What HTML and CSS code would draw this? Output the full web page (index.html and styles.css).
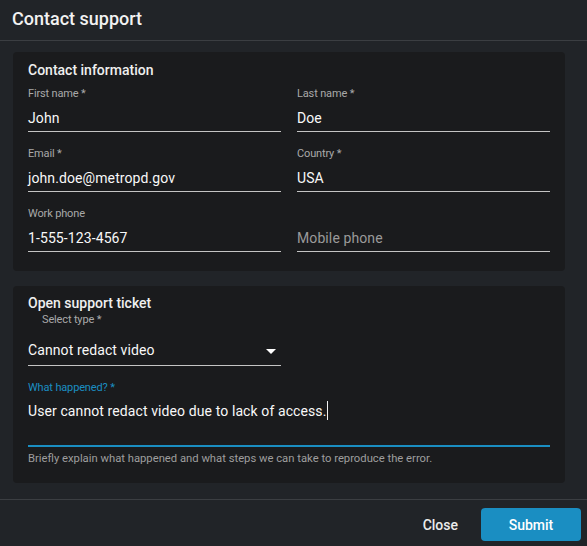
FILE: index.html
```html
<!DOCTYPE html>
<html>
<head>
<meta charset="utf-8">
<link rel="stylesheet" href="styles.css">
</head>
<body>
<div class="dialog">
  <header class="head">Contact support</header>
  <main class="body">
    <section class="card card-contact">
      <h2 class="card-title">Contact information</h2>
      <div class="grid">
        <div class="field">
          <div class="label">First name *</div>
          <div class="input">John</div>
        </div>
        <div class="field">
          <div class="label">Last name *</div>
          <div class="input">Doe</div>
        </div>
        <div class="field">
          <div class="label">Email *</div>
          <div class="input">john.doe@metropd.gov</div>
        </div>
        <div class="field">
          <div class="label">Country *</div>
          <div class="input">USA</div>
        </div>
        <div class="field">
          <div class="label">Work phone</div>
          <div class="input">1-555-123-4567</div>
        </div>
        <div class="field">
          <div class="label">&nbsp;</div>
          <div class="input placeholder">Mobile phone</div>
        </div>
      </div>
    </section>
    <section class="card card-ticket">
      <h2 class="card-title">Open support ticket</h2>
      <div class="label label-select">Select type *</div>
      <div class="select">
        <span>Cannot redact video</span>
        <svg class="arrow" width="10" height="5" viewBox="0 0 10 5"><path d="M0 0 L10 0 L5 5 Z" fill="#ffffff"/></svg>
      </div>
      <div class="label label-focus">What happened? *</div>
      <div class="textarea">User cannot redact video due to lack of access.<span class="caret"></span></div>
      <div class="helper">Briefly explain what happened and what steps we can take to reproduce the error.</div>
    </section>
  </main>
  <footer class="foot">
    <button class="btn btn-text">Close</button>
    <button class="btn btn-primary">Submit</button>
  </footer>
</div>
</body>
</html>
```
FILE: styles.css
```css
* { box-sizing: border-box; }
html, body {
  margin: 0;
  padding: 0;
  background: #212428;
}
body {
  font-family: Roboto, "Liberation Sans", sans-serif;
  color: #ececec;
}
.dialog {
  width: 587px;
  height: 546px;
  display: flex;
  flex-direction: column;
  background: #212428;
}
.head {
  height: 41px;
  padding: 8px 12px 0;
  font-size: 18px;
  font-weight: 500;
  line-height: 22px;
  border-bottom: 1px solid #3b3e42;
  color: #f2f2f2;
}
.body {
  padding: 11px 22px 0 13px;
  display: flex;
  flex-direction: column;
  gap: 15px;
  flex: 1;
}
.card {
  background: #1a1b1d;
  border-radius: 4px;
  padding: 9px 15px 15px;
}
.card-contact { height: 219px; }
.card-ticket { height: 197px; padding-top: 8px; }
.card-title {
  margin: 0;
  font-size: 14px;
  font-weight: 500;
  line-height: 18px;
  color: #efefef;
}
.grid {
  margin-top: 9px;
  display: grid;
  grid-template-columns: 253px 253px;
  column-gap: 16px;
  row-gap: 16px;
}
.label {
  font-size: 11px;
  line-height: 12px;
  color: #a9a9a9;
  letter-spacing: -0.15px;
}
.input {
  padding: 8px 0 3px;
  font-size: 14px;
  font-weight: 400;
  letter-spacing: 0.1px;
  line-height: 20px;
  border-bottom: 1px solid #c4c4c4;
  color: #f8f8f8;
}
.placeholder {
  color: #9a9a9a;
}
.label-select {
  margin-top: 2px;
  padding-left: 14px;
}
.select {
  width: 253px;
  height: 40px;
  padding-top: 14px;
  display: flex;
  justify-content: space-between;
  align-items: flex-start;
  border-bottom: 1px solid #c4c4c4;
  font-size: 14px;
  font-weight: 400;
  letter-spacing: 0.1px;
  line-height: 20px;
  color: #f8f8f8;
}
.arrow {
  margin: 9px 5px 0 0;
}
.label-focus {
  margin-top: 16px;
  color: #1a8ec2;
}
.textarea {
  width: 522px;
  height: 53px;
  padding-top: 7px;
  font-size: 14px;
  font-weight: 400;
  letter-spacing: 0.1px;
  line-height: 20px;
  border-bottom: 2px solid #1a8ec2;
  color: #f8f8f8;
}
.caret {
  display: inline-block;
  width: 1px;
  height: 19px;
  margin-left: 1px;
  vertical-align: -4px;
  background: #f2f2f2;
}
.helper {
  margin-top: 6px;
  font-size: 11.25px;
  line-height: 12px;
  color: #9e9e9e;
}
.foot {
  height: 47px;
  border-top: 1px solid #3b3e42;
  display: flex;
  justify-content: flex-end;
  align-items: flex-start;
  padding: 8px 6px 0 0;
  gap: 12px;
}
.btn {
  font-family: Roboto, "Liberation Sans", sans-serif;
  font-size: 14px;
  font-weight: 500;
  border: none;
  height: 33px;
  border-radius: 4px;
  cursor: pointer;
}
.btn-text {
  background: transparent;
  color: #ececec;
  padding: 0 11px;
}
.btn-primary {
  width: 100px;
  background: #1a8ec2;
  color: #ffffff;
}
```
